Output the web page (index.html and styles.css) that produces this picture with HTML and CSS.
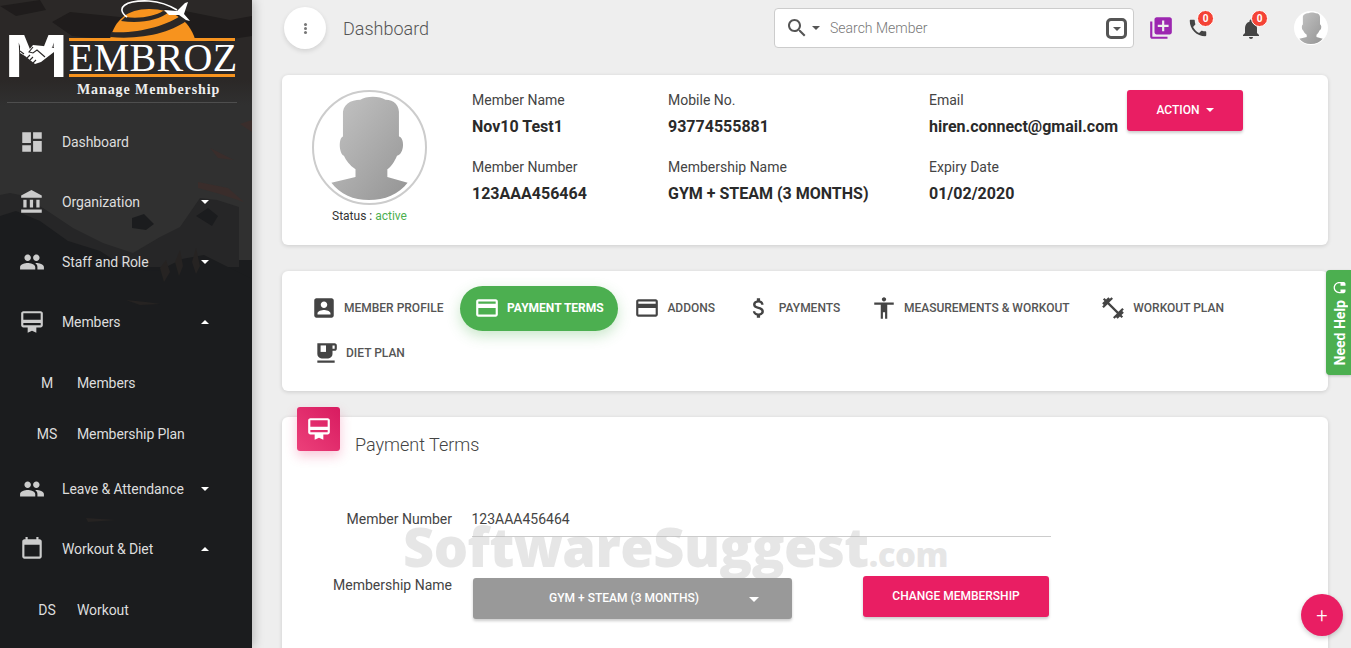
FILE: index.html
```html
<!DOCTYPE html>
<html>
<head>
	<meta charset="utf-8">
	<meta name="viewport" content="width=device-width, initial-scale=1">
	<title>Membroz - Dashboard</title>
	<link rel="stylesheet" href="styles.css">
</head>
<body>
<svg class="defs" width="0" height="0">
	<defs>
		<linearGradient id="silGrad" x1="0" y1="0" x2="1" y2="1">
			<stop offset="0" stop-color="#c4c4c4"/>
			<stop offset="1" stop-color="#949494"/>
		</linearGradient>
	</defs>
	<symbol id="silhouette" viewBox="0 0 115 115">
		<path fill="url(#silGrad)" d="M30 24 C29 13 38 8 48 8 C54 4 68 4 74 8 C83 8 89 14 88 24 L88 46 C94 47 94 64 86 66 C83 73 80 77 76 80 L76 88 L97 94 C88 106 73 112 57 112 C41 112 27 106 18 94 L43 88 L43 80 C37 76 33 71 31 66 C26 64 25 48 30 46 Z"/>
	</symbol>
</svg>

<div class="shell">
	<aside class="sidebar">
		<svg class="sidebar-bg" viewBox="0 0 252 648" width="252" height="648">
			<path fill="#1f1c1c" d="M70 12l60 6 40-10 60 12 22-4v20l-40 6-50-8-50 6-40-4-20-14zM0 6l40-6 6 10-30 6z"/>
			<path fill="#3a2d2b" d="M198 182l30 6 16 14-24-8-22-6zM210 148l24 12-16-2zM240 124l12-4v12z"/>
			<path fill="#262627" d="M0 195l10-2 10 2 23 13 30 20 30 15 30 10 27-16 20-10 20-29 17 2 22 7v60l-252 0z"/>
			<path fill="#1b1c1e" d="M0 216l16-5 24 10 28 20 32 10 28 18 30 2 24-12 22-4 20 10 28 14v80l-252 0z"/>
			<path fill="#262322" d="M160 268l6-8 4 12-6 10zM175 262l5-12 3 16-4 10zM192 262l4-14 4 18-4 8zM86 518l30 2-28 2zM126 300l20 2 14 2-20 1z"/>
			<path fill="#1b1c1e" d="M132 218l12-4 10 10-8 6-14-2zM196 216l12-8 10 8-6 10z"/>
		</svg>

		<div class="logo">
			<svg class="logo-globe" viewBox="0 0 130 42" width="130" height="42">
				<path fill="#f7931e" d="M3 39 C8 20 20 9 42 9 C66 9 82 20 88 39 Z"/>
				<path fill="#2b2827" d="M4 32 C30 34 60 26 76 14 L82 19 C66 32 36 40 3 37 Z"/>
				<path fill="#2b2827" d="M18 17 C34 19 48 16 56 11 L62 12 C52 20 34 24 14 21 Z"/>
				<path fill="none" stroke="#fff" stroke-width="1.6" d="M20 17 C8 8 18 0 42 1 C54 2 62 5 70 10"/>
				<path fill="#fff" d="M57 10 L70 11 L78 3 L81 2 L77 14 L83 21 L79 20 L72 15 L62 15 Z"/>
			</svg>
			<span class="logo-m">M</span>
			<svg class="logo-hands" viewBox="0 0 56 46" width="56" height="46">
				<path fill="#2b2827" d="M15 0 L27 12 L39 0 Z"/>
				<path fill="#2b2827" d="M11 14 L11 46 L45 46 L45 14 L27 20 Z"/>
				<path fill="#fff" d="M11 13 L20 17 L24 12 L34 13 L45 15 L45 19 L32 29 L26 31 L16 23 L11 20 Z"/>
				<path fill="none" stroke="#2b2827" stroke-width="1.1" d="M24 14 L20 19 L24 20 L28 17 L36 24 M18 25 L21 22 M21 27 L24 24 M24 30 L27 27 M11 18 L15 21"/>
			</svg>
			<div class="logo-right">
				<div class="logo-word">EMBROZ</div>
				<div class="logo-tag">Manage Membership</div>
			</div>
		</div>

		<nav class="nav">
			<a class="nav-item">
				<svg class="nav-icon" viewBox="0 0 24 24"><path d="M3 13h8V3H3v10zm0 8h8v-6H3v6zm10 0h8V11h-8v10zm0-18v6h8V3h-8z"/></svg>
				<span class="nav-text">Dashboard</span>
			</a>
			<a class="nav-item">
				<svg class="nav-icon" viewBox="0 0 24 24"><path d="M4 10v7h3v-7H4zm6 0v7h3v-7h-3zM2 22h19v-3H2v3zm14-12v7h3v-7h-3zm-4.5-9L2 6v2h19V6l-9.5-5z"/></svg>
				<span class="nav-text">Organization</span>
				<i class="caret"></i>
			</a>
			<a class="nav-item">
				<svg class="nav-icon" viewBox="0 0 24 24"><path d="M16 11c1.66 0 2.99-1.34 2.99-3S17.66 5 16 5c-1.66 0-3 1.34-3 3s1.34 3 3 3zm-8 0c1.66 0 2.99-1.34 2.99-3S9.66 5 8 5C6.34 5 5 6.34 5 8s1.34 3 3 3zm0 2c-2.33 0-7 1.17-7 3.5V19h14v-2.5c0-2.33-4.67-3.5-7-3.5zm8 0c-.29 0-.62.02-.97.05 1.16.84 1.97 1.97 1.97 3.45V19h6v-2.5c0-2.33-4.67-3.5-7-3.5z"/></svg>
				<span class="nav-text">Staff and Role</span>
				<i class="caret"></i>
			</a>
			<a class="nav-item">
				<svg class="nav-icon" viewBox="0 0 24 24"><path d="M20 2H4c-1.11 0-2 .89-2 2v11c0 1.11.89 2 2 2h4v5l4-2 4 2v-5h4c1.11 0 2-.89 2-2V4c0-1.11-.89-2-2-2zm0 13H4v-2h16v2zm0-5H4V4h16v6z"/></svg>
				<span class="nav-text">Members</span>
				<i class="caret up"></i>
			</a>
			<div class="sub-list">
				<a class="sub-item"><span class="sub-mark">M</span><span class="nav-text">Members</span></a>
				<a class="sub-item"><span class="sub-mark">MS</span><span class="nav-text">Membership Plan</span></a>
			</div>
			<a class="nav-item">
				<svg class="nav-icon" viewBox="0 0 24 24"><path d="M16 11c1.66 0 2.99-1.34 2.99-3S17.66 5 16 5c-1.66 0-3 1.34-3 3s1.34 3 3 3zm-8 0c1.66 0 2.99-1.34 2.99-3S9.66 5 8 5C6.34 5 5 6.34 5 8s1.34 3 3 3zm0 2c-2.33 0-7 1.17-7 3.5V19h14v-2.5c0-2.33-4.67-3.5-7-3.5zm8 0c-.29 0-.62.02-.97.05 1.16.84 1.97 1.97 1.97 3.45V19h6v-2.5c0-2.33-4.67-3.5-7-3.5z"/></svg>
				<span class="nav-text">Leave &amp; Attendance</span>
				<i class="caret"></i>
			</a>
			<a class="nav-item">
				<svg class="nav-icon" viewBox="0 0 24 24"><path d="M19 3h-1V1h-2v2H8V1H6v2H5c-1.11 0-1.99.9-1.99 2L3 19c0 1.1.89 2 2 2h14c1.1 0 2-.9 2-2V5c0-1.1-.9-2-2-2zm0 16H5V8h14v11z"/></svg>
				<span class="nav-text">Workout &amp; Diet</span>
				<i class="caret up"></i>
			</a>
			<div class="sub-list">
				<a class="sub-item"><span class="sub-mark">DS</span><span class="nav-text">Workout</span></a>
			</div>
		</nav>
	</aside>

	<main class="content">
		<header class="topbar">
			<button class="round-btn"><i class="dots"></i></button>
			<div class="page-title">Dashboard</div>
			<div class="search">
				<svg class="search-icon" viewBox="0 0 24 24"><path d="M15.5 14h-.79l-.28-.27C15.41 12.59 16 11.11 16 9.5 16 5.91 13.09 3 9.5 3S3 5.91 3 9.5 5.91 16 9.5 16c1.61 0 3.09-.59 4.23-1.57l.27.28v.79l5 4.99L20.49 19l-4.99-5zm-6 0C7.01 14 5 11.99 5 9.5S7.01 5 9.5 5 14 7.01 14 9.5 11.99 14 9.5 14z"/></svg>
				<i class="caret dark"></i>
				<span class="search-text">Search Member</span>
				<span class="search-end"><i class="caret dark"></i></span>
			</div>
			<svg class="top-add" viewBox="0 0 24 24"><path d="M4 6H2v14c0 1.1.9 2 2 2h14v-2H4V6zm16-4H8c-1.1 0-2 .9-2 2v12c0 1.1.9 2 2 2h12c1.1 0 2-.9 2-2V4c0-1.1-.9-2-2-2zm-1 9h-4v4h-2v-4H9V9h4V5h2v4h4v2z"/></svg>
			<div class="top-icon phone">
				<svg viewBox="0 0 24 24"><path d="M20 15.5c-1.25 0-2.45-.2-3.57-.57-.35-.11-.74-.03-1.02.24l-2.2 2.2c-2.83-1.44-5.15-3.75-6.59-6.59l2.2-2.21c.28-.26.36-.65.25-1C8.7 6.45 8.5 5.25 8.5 4c0-.55-.45-1-1-1H4c-.55 0-1 .45-1 1 0 9.39 7.61 17 17 17 .55 0 1-.45 1-1v-3.5c0-.55-.45-1-1-1z"/></svg>
				<span class="badge">0</span>
			</div>
			<div class="top-icon bell">
				<svg viewBox="0 0 24 24"><path d="M12 22c1.1 0 2-.9 2-2h-4c0 1.1.89 2 2 2zm6-6v-5c0-3.07-1.64-5.64-4.5-6.32V4c0-.83-.67-1.5-1.5-1.5s-1.5.67-1.5 1.5v.68C7.63 5.36 6 7.92 6 11v5l-2 2v1h16v-1l-2-2z"/></svg>
				<span class="badge">0</span>
			</div>
			<div class="top-avatar"><svg viewBox="0 0 115 115"><use href="#silhouette"/></svg></div>
		</header>

		<section class="card profile-card">
			<div class="photo-col">
				<div class="photo"><svg viewBox="0 0 115 115"><use href="#silhouette"/></svg></div>
				<div class="status">Status : <span class="status-on">active</span></div>
			</div>
			<div class="info-grid">
				<div class="info"><div class="info-label">Member Name</div><div class="info-value">Nov10 Test1</div></div>
				<div class="info"><div class="info-label">Mobile No.</div><div class="info-value">93774555881</div></div>
				<div class="info"><div class="info-label">Email</div><div class="info-value">hiren.connect@gmail.com</div></div>
				<div class="info"><div class="info-label">Member Number</div><div class="info-value">123AAA456464</div></div>
				<div class="info"><div class="info-label">Membership Name</div><div class="info-value">GYM + STEAM (3 MONTHS)</div></div>
				<div class="info"><div class="info-label">Expiry Date</div><div class="info-value">01/02/2020</div></div>
			</div>
			<button class="btn-pink action-btn">Action <i class="caret small"></i></button>
		</section>

		<section class="card tabs-card">
			<a class="tab">
				<svg viewBox="0 0 24 24"><path d="M3 5v14c0 1.1.89 2 2 2h14c1.1 0 2-.9 2-2V5c0-1.1-.9-2-2-2H5c-1.11 0-2 .9-2 2zm12 4c0 1.66-1.34 3-3 3s-3-1.34-3-3 1.34-3 3-3 3 1.34 3 3zm-9 8c0-2 4-3.1 6-3.1s6 1.1 6 3.1v1H6v-1z"/></svg>
				Member Profile
			</a>
			<a class="tab active">
				<svg viewBox="0 0 24 24"><path d="M20 4H4c-1.11 0-1.99.89-1.99 2L2 18c0 1.11.89 2 2 2h16c1.11 0 2-.89 2-2V6c0-1.11-.89-2-2-2zm0 14H4v-6h16v6zm0-10H4V6h16v2z"/></svg>
				Payment Terms
			</a>
			<a class="tab">
				<svg viewBox="0 0 24 24"><path d="M20 4H4c-1.11 0-1.99.89-1.99 2L2 18c0 1.11.89 2 2 2h16c1.11 0 2-.89 2-2V6c0-1.11-.89-2-2-2zm0 14H4v-6h16v6zm0-10H4V6h16v2z"/></svg>
				Addons
			</a>
			<a class="tab">
				<svg viewBox="0 0 24 24"><path d="M11.8 10.9c-2.27-.59-3-1.2-3-2.15 0-1.09 1.01-1.85 2.7-1.85 1.78 0 2.44.85 2.5 2.1h2.21c-.07-1.72-1.12-3.3-3.21-3.81V3h-3v2.16c-1.94.42-3.5 1.68-3.5 3.61 0 2.31 1.91 3.46 4.7 4.13 2.5.6 3 1.48 3 2.41 0 .69-.49 1.79-2.7 1.79-2.06 0-2.87-.92-2.98-2.1h-2.2c.12 2.19 1.76 3.42 3.68 3.83V21h3v-2.15c1.95-.37 3.5-1.5 3.5-3.55 0-2.84-2.43-3.81-4.7-4.4z"/></svg>
				Payments
			</a>
			<a class="tab">
				<svg viewBox="0 0 24 24"><path d="M12 2c1.1 0 2 .9 2 2s-.9 2-2 2-2-.9-2-2 .9-2 2-2zm9 7h-6v13h-2v-6h-2v6H9V9H3V7h18v2z"/></svg>
				Measurements &amp; Workout
			</a>
			<a class="tab">
				<svg viewBox="0 0 24 24"><path d="M20.57 14.86L22 13.43 20.57 12 17 15.57 8.43 7 12 3.43 10.57 2 9.14 3.43 7.71 2 5.57 4.14 4.14 2.71 2.71 4.14l1.43 1.43L2 7.71l1.43 1.43L2 10.57 3.43 12 7 8.43 15.57 17 12 20.57 13.43 22l1.43-1.43L16.29 22l2.14-2.14 1.43 1.43 1.43-1.43-1.43-1.43L22 16.29z"/></svg>
				Workout Plan
			</a>
			<a class="tab diet">
				<svg viewBox="0 0 24 24"><path d="M20 3H4v10c0 2.21 1.79 4 4 4h6c2.21 0 4-1.79 4-4v-3h2c1.11 0 2-.9 2-2V5c0-1.11-.89-2-2-2zm0 5h-2V5h2v3zM4 19h16v2H4z"/><path fill="#fff" d="M7 5h5v6H7z"/></svg>
				Diet Plan
			</a>
		</section>

		<section class="card form-card">
			<div class="watermark">SoftwareSuggest<span class="watermark-com">.com</span></div>
			<div class="form-head">
				<div class="form-badge">
					<svg viewBox="0 0 24 24"><path d="M20 2H4c-1.11 0-2 .89-2 2v11c0 1.11.89 2 2 2h4v5l4-2 4 2v-5h4c1.11 0 2-.89 2-2V4c0-1.11-.89-2-2-2zm0 13H4v-2h16v2zm0-5H4V4h16v6z"/></svg>
				</div>
				<h2 class="form-title">Payment Terms</h2>
			</div>
			<div class="form-row first">
				<label class="form-label">Member Number</label>
				<div class="form-input">123AAA456464</div>
			</div>
			<div class="form-row second">
				<label class="form-label">Membership Name</label>
				<button class="select-btn">GYM + STEAM (3 MONTHS)<i class="caret"></i></button>
				<button class="btn-pink change-btn">Change Membership</button>
			</div>
		</section>
	</main>

	<a class="help-tab">
		<svg viewBox="0 0 24 24"><path d="M12 1c-4.97 0-9 4.03-9 9v7c0 1.66 1.34 3 3 3h3v-8H5v-2c0-3.87 3.13-7 7-7s7 3.13 7 7v2h-4v8h3c1.66 0 3-1.34 3-3v-7c0-4.97-4.03-9-9-9z"/></svg>
		<span>Need Help</span>
	</a>
	<button class="fab">+</button>
</div>
</body>
</html>
```

FILE: styles.css
```css
* {
	box-sizing: border-box;
}

body {
	margin: 0;
	font-family: Roboto, "Liberation Sans", sans-serif;
	color: #333;
	background: #eee;
}

a {
	color: inherit;
}

button {
	font-family: inherit;
	border: none;
	cursor: pointer;
}

.defs {
	position: absolute;
}

.shell {
	position: relative;
	display: flex;
	height: 100vh;
	overflow: hidden;
}

/* sidebar */
.sidebar {
	position: relative;
	flex: 0 0 252px;
	height: 648px;
	background: linear-gradient(#2b2827 0, #2b2827 80px, #303030 105px, #303030 190px);
	background-color: #1b1c1e;
	background-repeat: no-repeat;
	background-size: 100% 260px;
	box-shadow: 2px 0 10px rgba(0, 0, 0, 0.22);
	overflow: hidden;
	z-index: 2;
}

.sidebar-bg {
	position: absolute;
	left: 0;
	top: 0;
}

.logo {
	position: relative;
	display: flex;
	height: 103px;
	margin: 0 15px 0 7px;
	padding: 31px 0 0 0;
	border-bottom: 1px solid #4e4e4e;
}

.logo-globe {
	position: absolute;
	left: 100px;
	top: 0;
}

.logo-m {
	display: inline-block;
	flex: 0 0 62px;
	height: 50px;
	font-family: "Liberation Sans", sans-serif;
	font-weight: 700;
	font-size: 62px;
	line-height: 50px;
	color: #fff;
	transform: translateX(-3px) scaleX(1.25);
	transform-origin: left;
}

.logo-hands {
	position: absolute;
	left: 2px;
	top: 33px;
}

.logo-right {
	display: flex;
	flex-direction: column;
	align-items: flex-start;
	margin-top: 7px;
}

.logo-word {
	width: 166px;
	height: 39px;
	border-top: 3px solid #f7931e;
	border-bottom: 3px solid #f7931e;
	font-family: "Liberation Serif", serif;
	font-size: 40px;
	line-height: 34px;
	letter-spacing: 0.3px;
	color: #fff;
	white-space: nowrap;
}

.logo-tag {
	margin: 5px 0 0 8px;
	font-family: "Liberation Serif", serif;
	font-weight: 700;
	font-size: 14px;
	letter-spacing: 0.9px;
	color: #eee;
	white-space: nowrap;
}

.nav {
	position: relative;
	margin-top: 9px;
}

.nav-item {
	display: flex;
	align-items: center;
	height: 60px;
	padding-left: 19px;
	font-size: 14px;
	color: #ddd;
}

.nav-icon {
	flex: 0 0 26px;
	width: 26px;
	height: 26px;
	fill: #ccc;
}

.nav-text {
	flex: 1;
	letter-spacing: -0.1px;
}

.nav-icon + .nav-text {
	margin-left: 17px;
}

.caret {
	display: inline-block;
	width: 0;
	height: 0;
	border-left: 4px solid transparent;
	border-right: 4px solid transparent;
	border-top: 4px solid #fff;
}

.caret.up {
	border-top: none;
	border-bottom: 4px solid #fff;
}

.nav-item .caret {
	margin-right: 43px;
}

.caret.dark {
	border-top-color: #555;
}

.caret.small {
	margin-left: 3px;
	vertical-align: 2px;
}

.sub-list {
	margin-top: 5px;
}

.sub-item {
	display: flex;
	align-items: center;
	height: 51px;
	font-size: 14px;
	color: #ddd;
}

.sub-mark {
	width: 30px;
	margin: 0 15px 0 32px;
	text-align: center;
}

/* top bar */
.content {
	flex: 1;
	min-width: 0;
	padding: 0 23px 0 30px;
}

.topbar {
	display: flex;
	align-items: center;
	height: 56px;
	padding-left: 2px;
}

.topbar > * {
	flex-shrink: 0;
}

.round-btn {
	display: flex;
	align-items: center;
	justify-content: center;
	width: 42px;
	height: 42px;
	border-radius: 50%;
	background: #fff;
	box-shadow: 0 2px 5px rgba(0, 0, 0, 0.12);
}

.dots {
	width: 3px;
	height: 3px;
	border-radius: 50%;
	background: #777;
	box-shadow: 0 -4px 0 #777, 0 4px 0 #777;
}

.page-title {
	flex: 0 0 431px;
	margin-left: 17px;
	font-size: 18px;
	font-weight: 300;
	color: #555;
}

.search {
	display: flex;
	align-items: center;
	width: 360px;
	height: 40px;
	padding: 0 6px 0 10px;
	background: #fff;
	border: 1px solid #ccc;
	border-radius: 4px;
}

.search-icon {
	width: 24px;
	height: 24px;
	fill: #555;
}

.search .caret {
	margin-left: 3px;
}

.search-text {
	flex: 1;
	margin-left: 10px;
	font-size: 14px;
	font-weight: 300;
	color: #777;
}

.search-end {
	display: flex;
	align-items: center;
	justify-content: center;
	width: 21px;
	height: 21px;
	border: 3px solid #555;
	border-radius: 5px;
}

.search-end .caret {
	margin: 1px 0 0;
}

.top-add {
	width: 26px;
	height: 26px;
	margin-left: 14px;
	fill: #9c27b0;
}

.top-icon {
	position: relative;
	width: 24px;
	height: 24px;
	margin-top: 1px;
}

.top-icon svg {
	display: block;
	width: 24px;
	height: 24px;
	fill: #444;
}

.phone {
	margin-left: 13px;
}

.phone svg {
	width: 22px;
	height: 22px;
}

.phone .badge {
	left: 10px;
}

.bell {
	margin-left: 28px;
}

.badge {
	position: absolute;
	left: 12px;
	top: -7px;
	width: 17px;
	height: 17px;
	border-radius: 50%;
	background: #f44336;
	border: 1px solid #fff;
	font-size: 10px;
	font-weight: 700;
	line-height: 15px;
	text-align: center;
	color: #fff;
}

.top-avatar {
	width: 34px;
	height: 34px;
	margin-left: 31px;
	border-radius: 50%;
	background: #fff;
	overflow: hidden;
}

.top-avatar svg {
	display: block;
	width: 34px;
	height: 34px;
}

/* cards */
.card {
	position: relative;
	background: #fff;
	border-radius: 6px;
	box-shadow: 0 1px 4px rgba(0, 0, 0, 0.14);
}

.profile-card {
	display: flex;
	align-items: flex-start;
	height: 170px;
	margin-top: 19px;
	padding: 15px 0 0 30px;
}

.photo-col {
	flex: 0 0 160px;
}

.photo {
	width: 115px;
	height: 115px;
	border: 2px solid #ccc;
	border-radius: 50%;
	overflow: hidden;
}

.photo svg {
	display: block;
	width: 111px;
	height: 111px;
}

.status {
	width: 115px;
	margin-top: 4px;
	font-size: 12px;
	line-height: 14px;
	text-align: center;
	color: #333;
}

.status-on {
	color: #4caf50;
}

.info-grid {
	display: grid;
	grid-template-columns: 196px 261px 198px;
	grid-auto-rows: 67px;
}

.info-label {
	margin-bottom: 7px;
	font-size: 14px;
	line-height: 20px;
	color: #444;
}

.info-value {
	font-size: 16px;
	font-weight: 700;
	line-height: 20px;
	color: #2a2a2a;
	white-space: nowrap;
}

.btn-pink {
	background: #e91e63;
	color: #fff;
	font-size: 12px;
	font-weight: 500;
	text-transform: uppercase;
	border-radius: 3px;
	box-shadow: 0 2px 3px rgba(0, 0, 0, 0.2);
}

.action-btn {
	width: 116px;
	height: 41px;
	padding-bottom: 3px;
}

.tabs-card {
	display: flex;
	flex-wrap: wrap;
	align-content: flex-start;
	height: 120px;
	margin-top: 26px;
	padding: 15px 40px 0 15px;
}

.tab {
	display: flex;
	align-items: center;
	gap: 7px;
	height: 45px;
	margin-right: 2.7px;
	padding: 0 14px 1px;
	font-size: 12px;
	font-weight: 500;
	text-transform: uppercase;
	color: #555;
	white-space: nowrap;
}

.tab svg {
	width: 26px;
	height: 26px;
	fill: #444;
}

.tab.active {
	background: #4caf50;
	color: #fff;
	font-weight: 700;
	border-radius: 23px;
	box-shadow: 0 5px 14px rgba(76, 175, 80, 0.3);
}

.tab.active svg {
	fill: #fff;
}

.tab.diet {
	margin-left: 2px;
}

/* payment form */
.form-card {
	height: 300px;
	margin-top: 26px;
}

.form-head {
	display: flex;
	padding-left: 15px;
}

.form-badge {
	display: flex;
	align-items: center;
	justify-content: center;
	width: 43px;
	height: 44px;
	margin-top: -10px;
	background: linear-gradient(45deg, #ec407a, #d81b60);
	border-radius: 3px;
	box-shadow: 0 5px 12px rgba(233, 30, 99, 0.25);
}

.form-badge svg {
	width: 26px;
	height: 26px;
	fill: #fff;
}

.form-title {
	margin: 17px 0 0 15px;
	font-size: 18px;
	font-weight: 300;
	line-height: 22px;
	color: #444;
}

.form-row {
	display: flex;
}

.form-row.first {
	align-items: center;
	margin-top: 45px;
}

.form-row.second {
	margin-top: 39px;
}

.form-label {
	flex: 0 0 170px;
	font-size: 14px;
	line-height: 18px;
	text-align: right;
	color: #444;
}

.form-input {
	width: 579px;
	height: 36px;
	margin-left: 19.5px;
	border-bottom: 1px solid #ccc;
	font-size: 14px;
	line-height: 36px;
	color: #444;
}

.select-btn {
	position: relative;
	width: 319px;
	height: 41px;
	margin: 2px 0 0 21px;
	padding: 0 17px 1px 0;
	background: #999;
	color: #fff;
	font-size: 12px;
	font-weight: 500;
	border-radius: 3px;
	box-shadow: 0 2px 3px rgba(0, 0, 0, 0.2);
}

.select-btn .caret {
	position: absolute;
	right: 33px;
	top: 19px;
	border-left-width: 5px;
	border-right-width: 5px;
	border-top-width: 5px;
}

.change-btn {
	width: 186px;
	height: 41px;
	margin-left: 71px;
	padding-bottom: 3px;
}

.watermark {
	position: absolute;
	left: 121px;
	top: 99px;
	font-family: "Open Sans", sans-serif;
	font-size: 54px;
	font-weight: 800;
	letter-spacing: -0.5px;
	line-height: 60px;
	color: rgba(190, 190, 190, 0.38);
	pointer-events: none;
	white-space: nowrap;
}

.watermark-com {
	font-size: 33px;
}

/* floating bits */
.help-tab {
	position: absolute;
	right: 0;
	top: 270px;
	display: flex;
	align-items: center;
	justify-content: center;
	gap: 5px;
	width: 25px;
	height: 105px;
	padding-left: 3px;
	writing-mode: vertical-rl;
	background: #4caf50;
	border-radius: 4px 0 0 4px;
	color: #fff;
	font-size: 14px;
	font-weight: 700;
	box-shadow: 0 1px 3px rgba(0, 0, 0, 0.2);
}

.help-tab span {
	transform: rotate(180deg);
}

.help-tab svg {
	width: 15px;
	height: 15px;
	fill: #fff;
	transform: rotate(-90deg);
}

.fab {
	position: absolute;
	left: 1301px;
	top: 594px;
	width: 42px;
	height: 42px;
	border-radius: 50%;
	background: #e91e63;
	color: #fff;
	font-size: 20px;
	font-weight: 300;
	line-height: 42px;
	padding: 0;
	box-shadow: 0 2px 5px rgba(0, 0, 0, 0.2);
	z-index: 3;
}
```
